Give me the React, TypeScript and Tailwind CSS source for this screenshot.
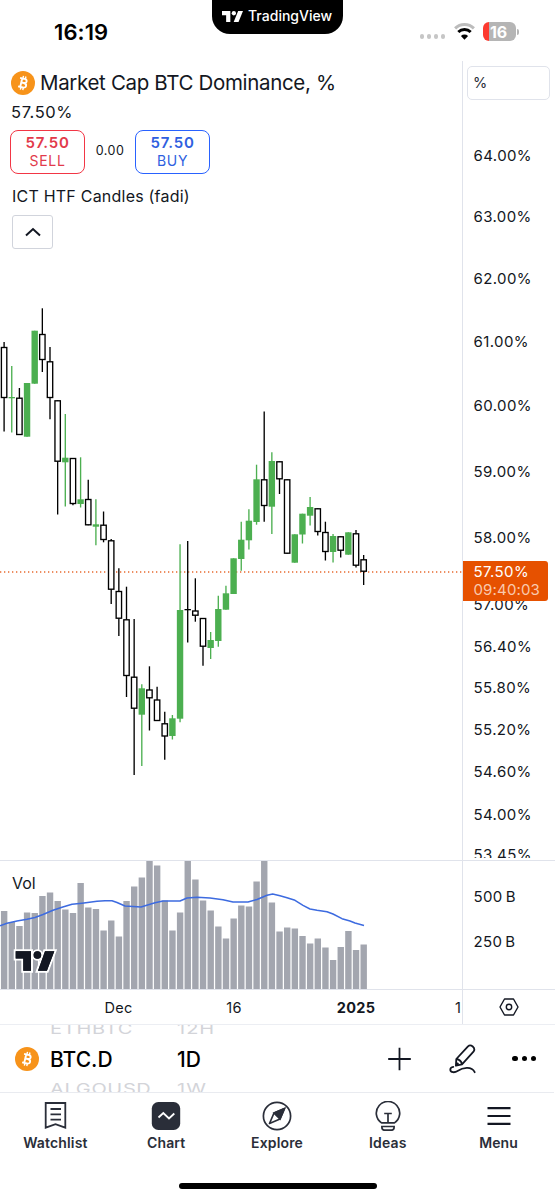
import React from 'react';

type Candle = {
  high: number;
  top: number;
  bottom: number;
  low: number;
  up?: boolean;
};

interface IconProps {
  className?: string;
}

const FIRST_X = 4.1;
const STEP = 7.65;

const c = (high: number, top: number, bottom: number, low: number, up = false): Candle => ({
  high,
  top,
  bottom,
  low,
  up,
});

const candles: Candle[] = [
  c(342, 347, 398, 431.5),
  c(366, 397, 398.3, 432.5, true),
  c(388, 397.7, 435, 435),
  c(383, 383, 436.7, 436.7, true),
  c(330.7, 330.7, 383.7, 383.7, true),
  c(308.3, 334, 360, 372),
  c(347, 361.3, 398, 419.3),
  c(400.3, 400.3, 461.7, 514.5),
  c(414, 457.7, 462.3, 506.5, true),
  c(458, 458, 504, 505.3),
  c(457.3, 499.3, 504, 507.5, true),
  c(479.7, 499, 525.3, 525.3),
  c(499.3, 524.3, 526.7, 545.3, true),
  c(511.5, 524.7, 540, 542.3),
  c(539, 540.3, 589.7, 604),
  c(568.3, 591, 618.7, 636),
  c(586.7, 619.3, 676, 697),
  c(619, 676.7, 708.7, 775),
  c(684.3, 688.3, 714.7, 766, true),
  c(666.3, 689.5, 698.3, 730.5),
  c(686.7, 699.5, 721, 721),
  c(711.7, 723.3, 736.5, 759.7),
  c(715, 718.3, 736, 739.5, true),
  c(544.3, 610, 718.7, 722.3, true),
  c(541, 609, 610.3, 642.5),
  c(578.3, 610.5, 615.7, 621.7),
  c(618, 618, 646.7, 665.7),
  c(632, 640, 648, 659, true),
  c(595.7, 609, 641, 646.7, true),
  c(585.7, 593.3, 609.7, 609.7, true),
  c(558.3, 558.3, 594, 594, true),
  c(521.7, 539.7, 559, 570.7, true),
  c(509.3, 520.7, 540.3, 549.5, true),
  c(464.7, 479.3, 522, 524.7, true),
  c(411.5, 479.3, 506, 521.7),
  c(452.3, 461, 506.7, 534, true),
  c(461.3, 461.3, 479.3, 494),
  c(479.3, 479.3, 553.7, 553.7),
  c(534.3, 534.3, 562.7, 562.7, true),
  c(513.7, 513.7, 534.5, 543.5, true),
  c(497, 507, 515.7, 525.5, true),
  c(508.3, 508.3, 532, 535.5),
  c(521.7, 532, 552, 560.5),
  c(534, 536, 552, 562.5, true),
  c(536.3, 536.3, 550.7, 557.5),
  c(532.3, 532.3, 554.7, 554.7, true),
  c(530, 533.3, 565.7, 567.5),
  c(555, 559.3, 571.7, 585),
];

const volumes = [
  78, 67, 63, 76.5, 76, 93, 96.5, 88, 79.5, 76, 106, 81.5, 80, 58.5, 68.5, 52.5, 88, 102.5, 111.5,
  128, 123.5, 88.5, 58.5, 76.5, 128, 109.5, 88.5, 78.5, 62.5, 50.5, 70.5, 83.5, 82.5, 107.5, 128,
  86.5, 57.5, 61.5, 60.5, 53, 45.5, 50.5, 41.5, 29, 42, 58, 39, 44.5,
];

const prices: [string, number][] = [
  ['64.00%', 155.5],
  ['63.00%', 217],
  ['62.00%', 279],
  ['61.00%', 342],
  ['60.00%', 406],
  ['59.00%', 471.5],
  ['58.00%', 538],
  ['57.00%', 605],
  ['56.40%', 646.5],
  ['55.80%', 688],
  ['55.20%', 730],
  ['54.60%', 772],
  ['54.00%', 815],
  ['53.45%', 854.5],
];

const TradingViewMark = ({ className }: IconProps) => (
  <svg className={className} viewBox="0 0 39 20">
    <g fill="currentColor">
      <path d="M0 0H15.5V20H7.7V7.7H0Z" />
      <circle cx="22" cy="4" r="4" />
      <path d="M30 0H39L30.700 20H21.700Z" />
    </g>
  </svg>
);

const BitcoinIcon = ({ className }: IconProps) => (
  <svg className={className} viewBox="0 0 24 24" fill="none">
    <circle cx="12" cy="12" r="12" fill="#f7931a" />
    <g stroke="#fff" strokeWidth="1.9" transform="rotate(13 12 12)">
      <path d="M8 7.600H12.600C16 7.600 16 11.800 12.700 11.800H10.200M12.700 11.800C16.600 11.800 16.600 16.400 12.900 16.400H8M10.200 7.600V16.400" />
      <path d="M10.900 5V7.600M13.400 5V7.600M10.900 16.400V19M13.400 16.400V19" strokeWidth="1.4" />
    </g>
  </svg>
);

const StatusBar = () => (
  <header className="relative flex h-[61px] items-start justify-between pt-[19px] pr-[36px] pl-[54px]">
    <span className="text-[22px] leading-[26px] font-semibold tracking-[0.100px] text-black">16:19</span>
    <div className="absolute top-0 left-[212px] flex h-[34px] w-[131px] items-center gap-[5px] rounded-b-[18px] bg-black pb-0.5 pl-2.5 text-white">
      <TradingViewMark className="h-[11px] w-[21px]" />
      <span className="-mt-px text-[14px] font-medium tracking-[0.020px]">TradingView</span>
    </div>
    <div className="mt-[3px] flex items-center">
      <div className="mt-2.5 mr-[9px] flex gap-[2.500px]">
        {[0, 1, 2, 3].map((dot) => (
          <span className="size-[4.500px] rounded-full bg-[#c6c6c6]" key={dot} />
        ))}
      </div>
      <svg className="mr-2 h-[17px] w-[21px]" viewBox="0 0 21 17" fill="none">
        <path d="M1.100 5.400A13.500 13.500 0 0 1 19.900 5.400" stroke="#bcbcbc" strokeWidth="3" />
        <path d="M4.300 9A9 9 0 0 1 16.700 9" stroke="#000" strokeWidth="3" />
        <path d="M10.500 16.700L6.900 12.900A5.200 5.200 0 0 1 14.100 12.900Z" fill="#000" />
      </svg>
      <div className="flex h-[19px] w-[33px] items-center justify-center rounded-[6px] bg-linear-to-r from-[#fc3b30] from-[18%] to-[#b5b5b5] to-[18%] pr-0.5">
        <span className="text-[16px] leading-none font-bold tracking-[-0.2px] text-white">16</span>
      </div>
      <span className="ml-px h-[6px] w-[2px] rounded-r-full bg-[#b5b5b5]" />
    </div>
  </header>
);

const TradeButton = ({ label, className }: { label: string; className: string }) => (
  <button className={`flex h-[44px] w-[75px] flex-col items-center justify-center rounded-[8px] border bg-white pt-px ${className}`}>
    <span className="text-[15px] leading-[18px] font-semibold tracking-[0.800px]">57.50</span>
    <span className="text-[14px] leading-[18px] tracking-[0.700px]">{label}</span>
  </button>
);

const Legend = () => (
  <div className="relative pl-[11px] text-[#131722]">
    <div className="flex h-[44px] items-center gap-[5px]">
      <BitcoinIcon className="size-[24px]" />
      <h1 className="text-[20.500px] tracking-[-0.340px] whitespace-nowrap">Market Cap BTC Dominance, %</h1>
    </div>
    <p className="text-[16.500px] leading-[14px] tracking-[0.600px]">57.50%</p>
    <div className="mt-[10.500px] -ml-px flex items-center">
      <TradeButton label="SELL" className="border-[#f23645] text-[#e23a4b]" />
      <span className="w-[50px] text-center text-[12.500px] tracking-[0.500px]">0.00</span>
      <TradeButton label="BUY" className="border-[#2962ff] text-[#2f5fe0]" />
    </div>
    <p className="mt-[11.500px] ml-px text-[16px] leading-[22px] tracking-[0.220px]">ICT HTF Candles (fadi)</p>
    <button className="mt-[8px] ml-px flex h-[34px] w-[41px] items-center justify-center rounded-[3px] border border-[#d1d4dc] bg-white">
      <svg className="h-[10px] w-[16px]" viewBox="0 0 16 10" fill="none" stroke="#131722" strokeWidth="2">
        <path d="M1 8.500L8 2L15 8.500" />
      </svg>
    </button>
  </div>
);

const CandleChart = () => (
  <svg className="absolute inset-0 h-[799px] w-[462px]" viewBox="0 61 462 799">
    <path d="M0 572H462" stroke="#e8692e" strokeWidth="1.300" strokeDasharray="1.300 2.700" />
    {candles.map(({ high, top, bottom, low, up }, i) => {
      const x = FIRST_X + i * STEP;
      const color = up ? '#4caf50' : '#000';
      return (
        <g key={i}>
          <path d={`M${x} ${high}V${low}`} stroke={color} strokeWidth="1.350" />
          {up || bottom - top < 2 ? (
            <rect x={x - 3.2} y={top} width="6.400" height={bottom - top} fill={color} />
          ) : (
            <rect
              x={x - 2.7}
              y={top + 0.5}
              width="5.400"
              height={bottom - top - 1}
              fill="#fff"
              stroke={color}
              strokeWidth="1.350"
            />
          )}
        </g>
      );
    })}
  </svg>
);

const PriceScale = () => (
  <div className="relative h-full">
    <svg className="block h-[797px] w-[92px]" viewBox="463 61 92 797">
      <g className="fill-[#131722] text-[15px] tracking-[0.400px]">
        {prices.map(([label, y]) => (
          <text x="473.500" y={y + 5} key={label}>
            {label}
          </text>
        ))}
      </g>
    </svg>
    <div className="absolute top-[5px] left-[4px] flex h-[34px] w-[83px] items-center rounded-[5px] border border-[#e0e3eb] bg-white pl-[5px] text-[14.500px] text-[#2a2e39]">
      %
    </div>
    <div className="absolute top-[500px] left-0 h-[40px] w-[85px] rounded-r-[3px] bg-[#e65100] pt-[2px] pl-[10.500px] text-[15px] leading-[18px] text-white">
      <p className="tracking-[0.400px]">57.50%</p>
      <p className="tracking-[0.150px] text-[#f9c9ae]">09:40:03</p>
    </div>
  </div>
);

const VolumeChart = () => (
  <div className="relative h-[128px]">
    <svg className="block h-[128px] w-[462px]" viewBox="0 861 462 128">
      {volumes.map((height, i) => (
        <rect
          x={FIRST_X + i * STEP - 3.15}
          y={989 - height}
          width="6.400"
          height={height}
          fill="#a3a6af"
          key={i}
        />
      ))}
      <path
        d="M0 925.700L7 923.200L17 921L27 919.300L35 917.500L43 914.500L53 910.300L62 907.300L72 904.300L82 903.200L97 901.300L105 900.700L112 900.700L117 902.500L125 906L141 907L155 902.800L163 901L180 901L187 898L197 897.300L210 898L223 899.700L233 902L248 902L257 899.500L267 895.200L272.700 894L280 895.700L287 897.700L295 900.300L303 905.300L310 909L317 910.300L327 911.700L333 914L342 918.700L350 921L355 923L364 925.500"
        fill="none"
        stroke="#3d6be0"
        strokeWidth="1.500"
        strokeLinejoin="round"
      />
      <g fill="#131722" stroke="#fff" strokeWidth="4" paintOrder="stroke" strokeLinejoin="miter">
        <path d="M15.700 951.200H31V970.800H23.300V958.600H15.700Z" />
        <path d="M45 951.200H54.300L46.900 970.800H38Z" />
        <circle cx="37.400" cy="955" r="3.800" />
      </g>
      <g fill="#131722">
        <path d="M15.700 951.200H31V970.800H23.300V958.600H15.700Z" />
        <path d="M45 951.200H54.300L46.900 970.800H38Z" />
        <circle cx="37.400" cy="955" r="3.800" />
      </g>
    </svg>
    <span className="absolute top-[10px] left-[12px] text-[16px] leading-[24px] text-[#131722]">Vol</span>
  </div>
);

const VolumeScale = () => (
  <svg className="block h-[128px] w-[92px]" viewBox="463 861 92 128">
    <g className="fill-[#131722] text-[15px] tracking-[0.350px]">
      <text x="473.500" y="902">500{'\u2009'}B</text>
      <text x="473.500" y="947">250{'\u2009'}B</text>
    </g>
  </svg>
);

const TimeScale = () => (
  <svg className="block h-[34px] w-[462px]" viewBox="0 990 462 34">
    <g className="fill-[#131722] text-[14.500px] tracking-[0.300px]" textAnchor="middle">
      <text x="118.500" y="1012.500">Dec</text>
      <text x="234" y="1012.500">16</text>
      <text x="356" y="1012.500" className="font-bold">2025</text>
      <text x="458" y="1012.500">1</text>
    </g>
  </svg>
);

const SymbolBar = () => (
  <section className="flex h-[68px] items-center border-t border-[#eceef3] pr-[19px] pl-[15px] text-[#131722]">
    <BitcoinIcon className="size-[24px]" />
    <div className="ml-[11px] flex h-[67px] w-[127px] flex-col items-start justify-center overflow-hidden whitespace-nowrap">
      <span className="origin-bottom-left scale-y-[0.740] text-[20px] leading-[20px] tracking-[0.750px] text-[#d3d4d9]">ETHBTC</span>
      <span className="pt-[11px] pb-[8px] text-[21px] leading-[26px] font-medium text-black">BTC.D</span>
      <span className="origin-top-left scale-y-[0.740] text-[20px] leading-[20px] tracking-[0.650px] text-[#d3d4d9]">ALGOUSD</span>
    </div>
    <div className="flex h-[67px] flex-1 flex-col items-start justify-center overflow-hidden whitespace-nowrap">
      <span className="origin-bottom-left scale-y-[0.740] text-[20px] leading-[20px] tracking-[1px] text-[#d3d4d9]">12H</span>
      <span className="pt-[11px] pb-[8px] text-[21px] leading-[26px] font-medium text-black">1D</span>
      <span className="origin-top-left scale-y-[0.740] text-[20px] leading-[20px] tracking-[1px] text-[#d3d4d9]">1W</span>
    </div>
    <svg className="h-[24px] w-[24px]" viewBox="0 0 24 24" fill="none" stroke="currentColor" strokeWidth="1.800">
      <path d="M11.500 0.700V23.300M0.200 12H22.800" />
    </svg>
    <svg
      className="ml-[37px] h-[30px] w-[28px]"
      viewBox="0 0 28 30"
      fill="none"
      stroke="currentColor"
      strokeWidth="1.800"
      strokeLinejoin="round"
    >
      <path d="M7.300 15L19 2.300C21.800 -0.200 26.900 3.800 24.700 7.400L13 20.300L6.900 21.700ZM7.300 15C10.300 15.400 12.500 17.400 13 20.300M6.900 21.700L9.300 18.900" />
      <path
        d="M4.300 22.800C2.300 23 1.300 24.300 1.300 25.700C1.300 28.900 6 28.700 8.500 27.100C13.500 23.700 22.500 21.700 25.700 28.200"
        strokeLinecap="round"
      />
    </svg>
    <div className="ml-[35px] flex gap-[3.700px]">
      {[0, 1, 2].map((dot) => (
        <span className="size-[5.400px] rounded-full bg-black" key={dot} />
      ))}
    </div>
  </section>
);

const WatchlistIcon = () => (
  <svg className="h-[30px] w-[24px]" viewBox="0 0 24 30" fill="none" stroke="#2a2e39" strokeWidth="1.800">
    <path d="M2.700 2H22.300V26.700L12.500 23.200L2.700 26.700ZM7.500 8H18M7.500 13.300H18M7.500 18.700H18" />
  </svg>
);

const ChartIcon = () => (
  <svg className="size-[30px]" viewBox="0 0 30 30" fill="none">
    <rect x="0.800" y="1" width="28.400" height="28" rx="6.500" fill="#2a2e39" />
    <path d="M7.500 16.500L12.300 12L18 17.500L23.300 12.500" stroke="#fff" strokeWidth="1.800" />
  </svg>
);

const ExploreIcon = () => (
  <svg className="size-[30px]" viewBox="0 0 30 30" fill="none" stroke="#2a2e39" strokeWidth="1.700">
    <circle cx="15" cy="15" r="13.600" />
    <path d="M22.500 7.500L12 12L7.500 22.500L18 18Z" strokeLinejoin="round" />
    <path d="M22.500 7.500L12 12L18 18Z" fill="#2a2e39" />
  </svg>
);

const IdeasIcon = () => (
  <svg className="size-[30px]" viewBox="0 0 30 30" fill="none" stroke="#2a2e39" strokeWidth="1.700">
    <path d="M8.500 21.900H21.500A11.700 11.700 0 1 0 8.500 21.900ZM11.200 12.500H18.800M15 12.500V21.900" strokeLinejoin="round" />
    <path d="M8.900 25.500H21.100V26.300C21.100 28.200 20 29.200 18.500 29.200H11.500C10 29.200 8.900 28.200 8.900 26.300Z" />
  </svg>
);

const MenuIcon = () => (
  <svg className="h-[30px] w-[24px]" viewBox="0 0 24 30" fill="none" stroke="#131722" strokeWidth="2.200">
    <path d="M0.500 7.200H23.500M0.500 15H23.500M0.500 22.800H23.500" />
  </svg>
);

const tabs = [
  { label: 'Watchlist', icon: <WatchlistIcon /> },
  { label: 'Chart', icon: <ChartIcon /> },
  { label: 'Explore', icon: <ExploreIcon /> },
  { label: 'Ideas', icon: <IdeasIcon /> },
  { label: 'Menu', icon: <MenuIcon /> },
];

const TabBar = () => (
  <nav className="grid h-[108px] w-[554px] grid-cols-5 border-t border-[#e9ebf0] pt-[8px]">
    {tabs.map(({ label, icon }) => (
      <button className="flex flex-col items-center" key={label}>
        {icon}
        <span className="mt-[3px] text-[14px] leading-[18px] font-semibold tracking-[0.150px] text-[#2a2e39]">{label}</span>
      </button>
    ))}
  </nav>
);

const App = () => (
  <main className="relative flex h-[1200px] w-[555px] flex-col overflow-hidden bg-white font-['Inter',sans-serif]">
    <StatusBar />
    <div className="grid h-[963px] grid-cols-[462px_93px] grid-rows-[799px_129px_35px]">
      <div className="relative">
        <CandleChart />
        <Legend />
      </div>
      <div className="border-l border-[#e0e3eb]">
        <PriceScale />
      </div>
      <div className="border-t border-[#e0e3eb]">
        <VolumeChart />
      </div>
      <div className="border-t border-l border-[#e0e3eb]">
        <VolumeScale />
      </div>
      <div className="border-t border-[#e0e3eb]">
        <TimeScale />
      </div>
      <div className="flex items-center justify-center border-t border-l border-[#e0e3eb]">
        <svg className="h-[20px] w-[20px]" viewBox="0 0 20 20" fill="none" stroke="#131722" strokeWidth="1.400">
          <path d="M5.500 2H14.500L19 10L14.500 18H5.500L1 10Z" strokeLinejoin="round" />
          <circle cx="10" cy="10" r="2.700" />
        </svg>
      </div>
    </div>
    <SymbolBar />
    <TabBar />
    <div className="absolute bottom-[11px] left-[179px] h-[6px] w-[198px] rounded-full bg-black" />
  </main>
);

export default App;
